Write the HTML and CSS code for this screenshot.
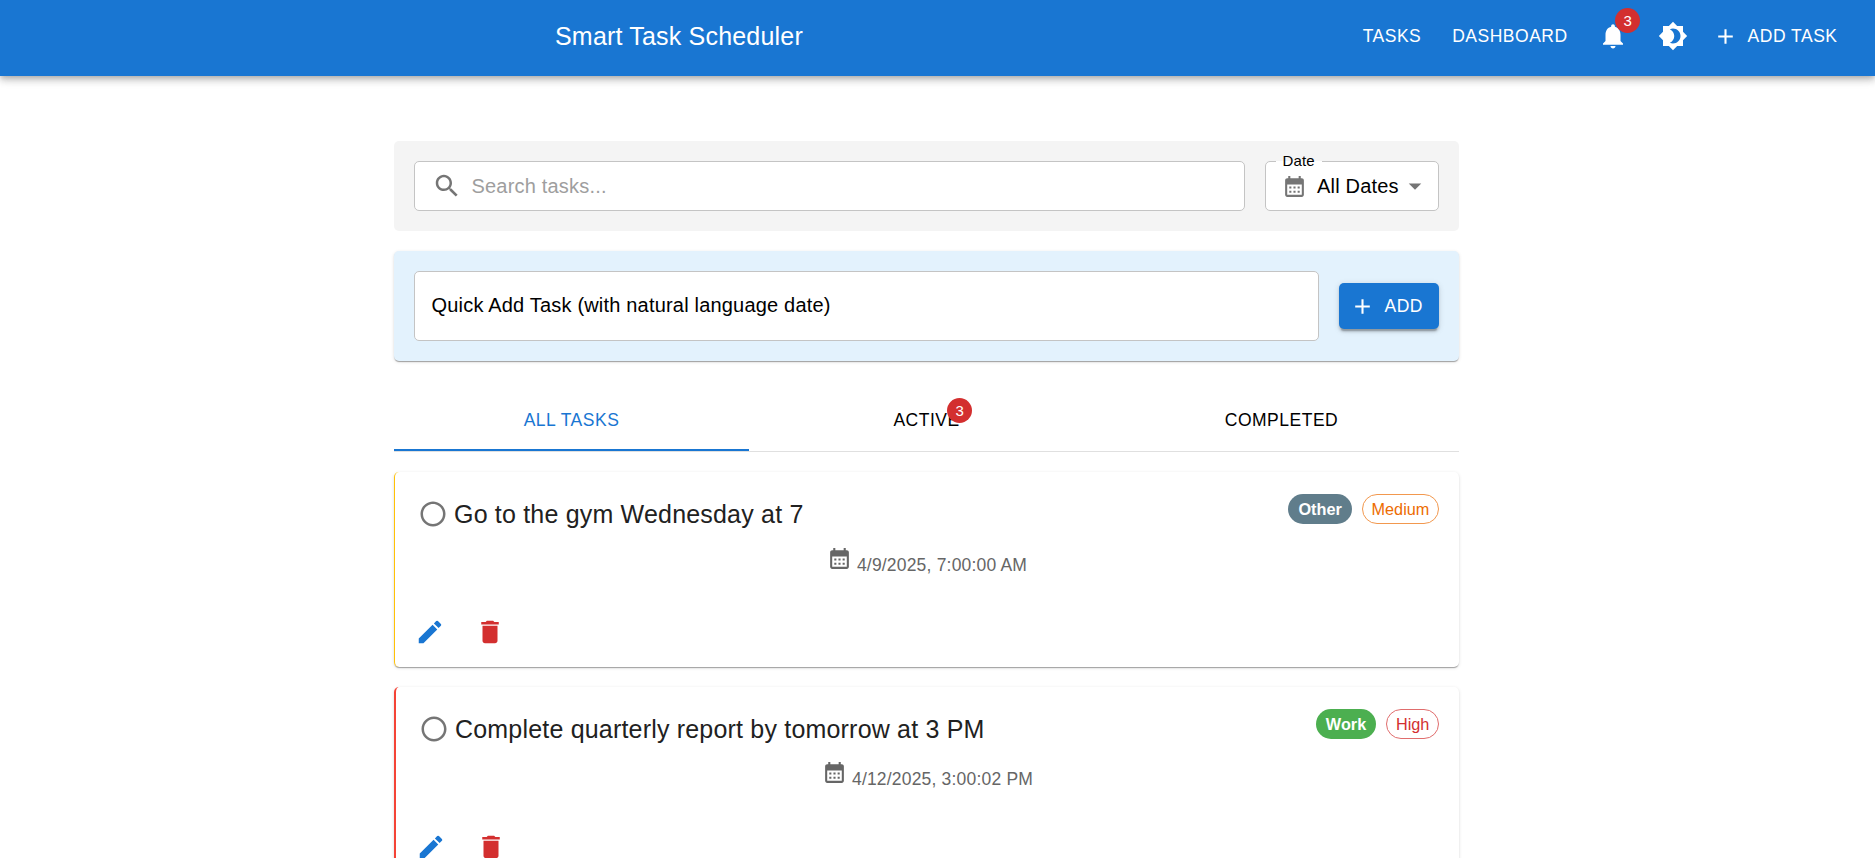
FILE: index.html
```html
<!DOCTYPE html>
<html lang="en">
<head>
<meta charset="utf-8">
<title>Smart Task Scheduler</title>
<link rel="stylesheet" href="styles.css">
</head>
<body>
<svg class="defs" aria-hidden="true">
  <symbol id="calendar" viewBox="0 0 24 24"><path d="M19 4h-1V2h-2v2H8V2H6v2H5c-1.11 0-1.99.9-1.99 2L3 20c0 1.1.89 2 2 2h14c1.1 0 2-.9 2-2V6c0-1.1-.9-2-2-2zm0 16H5V10h14v10zM9 14H7v-2h2v2zm4 0h-2v-2h2v2zm4 0h-2v-2h2v2zm-8 4H7v-2h2v2zm4 0h-2v-2h2v2zm4 0h-2v-2h2v2z"/></symbol>
  <symbol id="plus" viewBox="0 0 24 24"><path d="M19 13h-6v6h-2v-6H5v-2h6V5h2v6h6v2z"/></symbol>
  <symbol id="edit" viewBox="0 0 24 24"><path d="M3 17.25V21h3.75L17.81 9.94l-3.75-3.75L3 17.25zM20.71 7.04c.39-.39.39-1.02 0-1.41l-2.34-2.34a.9959.9959 0 0 0-1.41 0l-1.83 1.83 3.75 3.75 1.83-1.83z"/></symbol>
  <symbol id="trash" viewBox="0 0 24 24"><path d="M6 19c0 1.1.9 2 2 2h8c1.1 0 2-.9 2-2V7H6v12zM19 4h-3.5l-1-1h-5l-1 1H5v2h14V4z"/></symbol>
  <symbol id="radio" viewBox="0 0 24 24"><path d="M12 2C6.48 2 2 6.48 2 12s4.48 10 10 10 10-4.48 10-10S17.52 2 12 2zm0 18c-4.42 0-8-3.58-8-8s3.58-8 8-8 8 3.58 8 8-3.58 8-8 8z"/></symbol>
</svg>

<header class="appbar">
  <h1 class="brand">Smart Task Scheduler</h1>
  <nav class="nav">
    <a class="nav-link">TASKS</a>
    <a class="nav-link">DASHBOARD</a>
    <span class="nav-icon bell">
      <svg class="icon" viewBox="0 0 24 24"><path d="M12 22c1.1 0 2-.9 2-2h-4c0 1.1.89 2 2 2zm6-6v-5c0-3.07-1.64-5.64-4.5-6.32V4c0-.83-.67-1.5-1.5-1.5s-1.5.67-1.5 1.5v.68C7.63 5.36 6 7.92 6 11v5l-2 2v1h16v-1l-2-2z"/></svg>
      <span class="badge">3</span>
    </span>
    <svg class="icon nav-theme" viewBox="0 0 24 24"><path d="M20 8.69V4h-4.69L12 .69 8.69 4H4v4.69L.69 12 4 15.31V20h4.69L12 23.31 15.31 20H20v-4.69L23.31 12 20 8.69zM12 18c-.89 0-1.74-.2-2.5-.55C11.56 16.5 13 14.42 13 12s-1.44-4.5-3.5-5.45C10.26 6.2 11.11 6 12 6c3.31 0 6 2.69 6 6s-2.69 6-6 6z"/></svg>
    <a class="nav-link nav-add"><svg class="icon-sm"><use href="#plus"/></svg>ADD TASK</a>
  </nav>
</header>

<main class="page">
  <section class="filters">
    <div class="field search">
      <svg class="icon" viewBox="0 0 24 24"><path d="M15.5 14h-.79l-.28-.27C15.41 12.59 16 11.11 16 9.5 16 5.91 13.09 3 9.5 3S3 5.91 3 9.5 5.91 16 9.5 16c1.61 0 3.09-.59 4.23-1.57l.27.28v.79l5 4.99L20.49 19l-4.99-5zm-6 0C7.01 14 5 11.99 5 9.5S7.01 5 9.5 5 14 7.01 14 9.5 11.99 14 9.5 14z"/></svg>
      <span class="placeholder">Search tasks...</span>
    </div>
    <div class="field date">
      <span class="label">Date</span>
      <svg class="icon-sm"><use href="#calendar"/></svg>
      <span class="date-value">All Dates</span>
      <svg class="icon" viewBox="0 0 24 24"><path d="m7 10 5 5 5-5z"/></svg>
    </div>
  </section>

  <section class="quick">
    <div class="field quick-input">Quick Add Task (with natural language date)</div>
    <button class="add-btn"><svg class="icon-sm"><use href="#plus"/></svg>ADD</button>
  </section>

  <div class="tabs">
    <div class="tab active">ALL TASKS</div>
    <div class="tab"><span class="tab-label">ACTIVE<span class="badge">3</span></span></div>
    <div class="tab">COMPLETED</div>
  </div>

  <article class="card medium">
    <div class="card-head">
      <svg class="icon radio"><use href="#radio"/></svg>
      <h2 class="card-title">Go to the gym Wednesday at 7</h2>
      <span class="chip other">Other</span>
      <span class="chip outline-medium">Medium</span>
    </div>
    <div class="due"><svg class="icon-sm"><use href="#calendar"/></svg><span class="due-text">4/9/2025, 7:00:00 AM</span></div>
    <div class="actions">
      <svg class="icon edit"><use href="#edit"/></svg>
      <svg class="icon trash"><use href="#trash"/></svg>
    </div>
  </article>

  <article class="card high">
    <div class="card-head">
      <svg class="icon radio"><use href="#radio"/></svg>
      <h2 class="card-title">Complete quarterly report by tomorrow at 3 PM</h2>
      <span class="chip work">Work</span>
      <span class="chip outline-high">High</span>
    </div>
    <div class="due"><svg class="icon-sm"><use href="#calendar"/></svg><span class="due-text">4/12/2025, 3:00:02 PM</span></div>
    <div class="actions">
      <svg class="icon edit"><use href="#edit"/></svg>
      <svg class="icon trash"><use href="#trash"/></svg>
    </div>
  </article>
</main>
</body>
</html>
```

FILE: styles.css
```css
* { box-sizing: border-box; }

html, body { height: 100%; overflow: hidden; }

body {
  margin: 0;
  background: #fff;
  color: #000;
  font-family: "Liberation Sans", Arial, sans-serif;
  font-size: 20px;
}

svg { display: block; flex: none; fill: currentColor; }
.defs { display: none; }
.icon { width: 30px; height: 30px; }
.icon-sm { width: 25px; height: 25px; }

.appbar {
  display: flex;
  align-items: center;
  height: 76px;
  padding: 0 37.5px 4px 555px;
  background: #1976d2;
  color: #fff;
  box-shadow: 0 2.5px 5px -1.25px rgba(0,0,0,.2), 0 5px 6.25px rgba(0,0,0,.14), 0 1.25px 12.5px rgba(0,0,0,.12);
}
.brand { margin: 0; font-size: 25px; font-weight: 400; line-height: 40px; letter-spacing: .19px; }
.nav { display: flex; align-items: center; margin-left: auto; }
.nav-link { font-size: 17.5px; line-height: 30px; letter-spacing: .5px; margin-right: 30px; white-space: nowrap; }
.nav-link:first-child { margin-right: 31px; }
.nav-icon { position: relative; }
.bell { margin-right: 30px; }
.nav-theme { margin-right: 25px; }
.nav-add { display: flex; align-items: center; gap: 10px; margin-right: 0; }

.badge {
  position: absolute;
  top: -13px;
  right: -12.5px;
  width: 25px;
  height: 25px;
  border-radius: 50%;
  background: #d32f2f;
  color: #fff;
  font-size: 15px;
  line-height: 25px;
  letter-spacing: 0;
  text-align: center;
}

.page { width: 1065px; margin: 65px 0 0 394px; }

.field {
  display: flex;
  align-items: center;
  background: #fff;
  border: 1px solid #c4c4c4;
  border-radius: 5px;
  letter-spacing: .19px;
}

.filters {
  display: flex;
  gap: 20px;
  height: 90px;
  padding: 20px;
  background: #f4f4f4;
  border-radius: 5px;
}
.search { flex: 1; padding-left: 17px; gap: 9.5px; }
.search .icon, .date .icon, .date .icon-sm { color: #757575; }
.placeholder { color: #9e9e9e; }
.date { position: relative; width: 174px; padding-left: 16px; }
.date-value { margin-left: 10px; white-space: nowrap; }
.date > .icon { margin-left: 1px; }
.label {
  position: absolute;
  top: -10px;
  left: 9.5px;
  padding: 0 7px;
  font-size: 15px;
  line-height: 18px;
  letter-spacing: .14px;
  background: linear-gradient(#fff, #fff) 0 9px / 100% 1px no-repeat;
}

.quick {
  display: flex;
  align-items: center;
  gap: 20px;
  height: 110px;
  margin-top: 20px;
  padding: 20px;
  background: #e3f2fd;
  border-radius: 5px;
}
.quick, .card {
  box-shadow: 0 2px 1px -1px rgba(0,0,0,.2), 0 1px 1px rgba(0,0,0,.14), 0 1px 3.75px rgba(0,0,0,.12);
}
.quick-input { flex: 1; height: 70px; padding: 0 0 1px 16.5px; }
.add-btn {
  display: flex;
  align-items: center;
  gap: 9.5px;
  width: 100px;
  height: 46px;
  padding: 0 0 0 11px;
  border: 0;
  border-radius: 5px;
  background: #1976d2;
  color: #fff;
  font: 17.5px "Liberation Sans", Arial, sans-serif;
  letter-spacing: .5px;
  box-shadow: 0 3.75px 1.25px -2.5px rgba(0,0,0,.2), 0 2.5px 2.5px rgba(0,0,0,.14), 0 1.25px 6.25px rgba(0,0,0,.12);
}

.tabs { display: flex; height: 61px; margin-top: 30px; border-bottom: 1px solid #e0e0e0; }
.tab {
  flex: 1;
  display: flex;
  align-items: center;
  justify-content: center;
  font-size: 17.5px;
  letter-spacing: .5px;
  border-bottom: 2px solid transparent;
}
.tab.active { color: #1976d2; border-bottom-color: #1976d2; }
.tab-label { position: relative; }
.tab-label .badge { top: -12px; }

.card {
  height: 195px;
  margin-top: 20px;
  padding: 22px 20px 0 20px;
  border-left: 1px solid #ffc107;
  border-radius: 5px;
}
.card.high { border-left: 2px solid #f44336; }
.card-head { display: flex; align-items: flex-start; height: 52px; }
.radio { margin: 5px 6px 0 3px; color: #757575; }
.card-title { flex: 1; margin: 0; font-size: 25px; font-weight: 400; line-height: 40px; letter-spacing: .19px; color: #212121; }
.chip {
  height: 30px;
  margin: 0 0 0 10px;
  padding: 0 10px;
  border-radius: 15px;
  font-size: 16.25px;
  line-height: 30px;
  color: #fff;
  font-weight: 700;
}
.other { background: #607d8b; }
.work { background: #4caf50; }
.outline-medium, .outline-high { padding: 0 8.7px; border: 1px solid; line-height: 28px; font-weight: 400; }
.outline-medium { color: #ed6c02; border-color: #f2984e; }
.outline-high { color: #d32f2f; border-color: #e06d6d; }
.due { display: flex; justify-content: center; gap: 5px; height: 71px; color: #666; }
.high .card-head { height: 51px; }
.high .due { height: 72px; }
.due-text { padding-top: 9px; font-size: 17.5px; line-height: 20px; letter-spacing: .19px; }
.actions { display: flex; gap: 30px; margin-left: -.3px; }
.edit { color: #1976d2; }
.trash { color: #d32f2f; }
```
